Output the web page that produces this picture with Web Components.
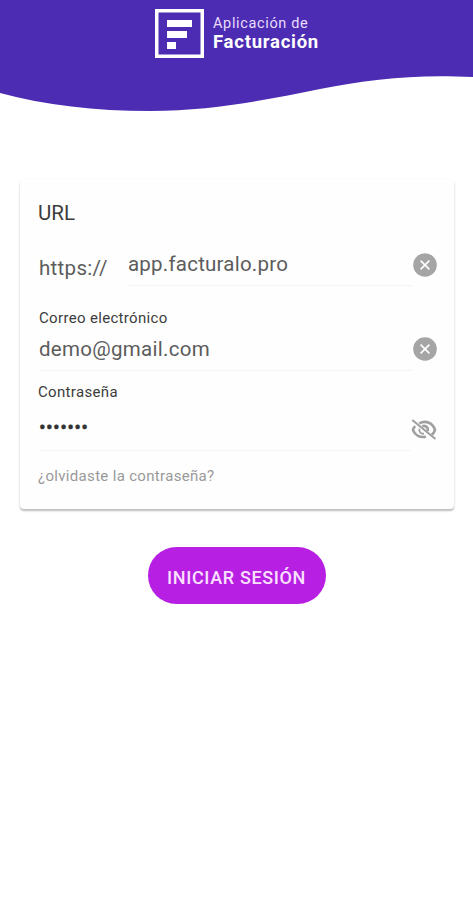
<!DOCTYPE html>
<html lang="es">
<head>
<meta charset="utf-8">
<title>Facturación</title>
<style>
body {
  margin: 0;
  background: #fff;
  font-family: Roboto, "Liberation Sans", sans-serif;
  color: #5c5c5c;
}
</style>
</head>
<body>
<login-page>
  <app-header slot="header">
    <span slot="top">Aplicación de</span>
    <span slot="name">Facturación</span>
  </app-header>
  <login-card>
    <span slot="title">URL</span>
    <login-field class="url" icon="clear">
      <span slot="prefix">https://</span>
      <span>app.facturalo.pro</span>
    </login-field>
    <login-field class="mail" icon="clear">
      <span slot="label">Correo electrónico</span>
      <span>demo@gmail.com</span>
    </login-field>
    <login-field class="pass" icon="hidden">
      <span slot="label">Contraseña</span>
      <span class="dots">•••••••</span>
    </login-field>
    <span slot="footer">¿olvidaste la contraseña?</span>
  </login-card>
  <pill-button slot="action">INICIAR SESIÓN</pill-button>
</login-page>

<script>
const define = (name, html) => {
  const t = document.createElement('template');
  t.innerHTML = html;
  customElements.define(name, class extends HTMLElement {
    constructor() {
      super();
      this.attachShadow({ mode: 'open' });
      this.shadowRoot.appendChild(t.content.cloneNode(true));
    }
  });
};

define('login-page', `
<style>
:host {
  display: flex;
  flex-direction: column;
  height: 900px;
  overflow: hidden;
}
main {
  padding: 67px 19px 0 20px;
}
.action {
  display: flex;
  justify-content: center;
  padding-top: 38px;
}
</style>
<slot name="header"></slot>
<main><slot></slot></main>
<div class="action"><slot name="action"></slot></div>
`);

define('app-header', `
<style>
:host {
  display: grid;
  height: 112px;
  color: #e9dcff;
}
.wave, .brand {
  grid-area: 1 / 1;
}
.wave {
  display: block;
}
.brand {
  display: flex;
  align-items: flex-start;
  gap: 9px;
  padding: 9px 0 0 155px;
}
.text {
  display: flex;
  flex-direction: column;
  padding-top: 6px;
}
.top {
  font-size: 14.5px;
  line-height: 18px;
  letter-spacing: .65px;
}
.name {
  font-size: 18.5px;
  font-weight: 700;
  line-height: 18px;
  letter-spacing: .75px;
  color: #fff;
}
</style>
<svg class="wave" width="473" height="112" viewBox="0 0 473 112">
  <path fill="#4c2cb3" d="M0 0H473V77C415 74 370 79 320 89C270 99 215 111 150 111C95 111 45 105 0 93Z"/>
</svg>
<div class="brand">
  <svg width="49" height="49" viewBox="0 0 49 49">
    <rect x="1.75" y="1.75" width="45.5" height="45.5" fill="none" stroke="#fff" stroke-width="3.5"/>
    <path fill="#fff" d="M12 11H37V18H12ZM12 22H32V29H12ZM12 33H21V40H12Z"/>
  </svg>
  <div class="text">
    <div class="top"><slot name="top"></slot></div>
    <div class="name"><slot name="name"></slot></div>
  </div>
</div>
`);

define('login-card', `
<style>
:host {
  display: flex;
  flex-direction: column;
  box-sizing: border-box;
  height: 330px;
  padding: 22px 16px 0 18px;
  border-radius: 4px;
  background: #fefefe;
  box-shadow: 0 2px 2px rgba(0, 0, 0, .25), 0 0 3px rgba(0, 0, 0, .04);
}
.title {
  font-size: 20.5px;
  line-height: 24px;
  color: #3c3c3c;
}
.footer {
  padding-top: 15px;
  font-size: 15px;
  line-height: 20px;
  letter-spacing: .32px;
  color: #999;
}
</style>
<div class="title"><slot name="title"></slot></div>
<slot></slot>
<div class="footer"><slot name="footer"></slot></div>
`);

const icons = {
  clear: `<svg width="24" height="24" viewBox="0 0 24 24">
    <circle cx="12" cy="12" r="11.8" fill="#a5a5a5"/>
    <path d="M7.6 7.6L16.4 16.4M16.4 7.6L7.6 16.4" stroke="#fff" stroke-width="1.6"/>
  </svg>`,
  hidden: `<svg width="26" height="24" viewBox="0 0 26 24">
    <g fill="none" stroke="#a0a0a0">
      <path d="M8.2 5.3C15 1.8 22 5 24 12C23.2 14.2 22.3 15.6 20.8 16.8" stroke-width="2.6"/>
      <path d="M4.2 8.2C2.8 9.6 2 11 2 12C4 17.4 9 20 15 18.7" stroke-width="2.6"/>
      <path d="M11.3 8.2C15 6.9 17.6 10 16.8 13" stroke-width="2.8"/>
      <path d="M8.4 10.8C7.6 13.8 10.2 16.2 13 15.7" stroke-width="1.8"/>
      <path d="M1.3 2L24.5 21" stroke-width="2.2"/>
    </g>
  </svg>`
};

const field = document.createElement('template');
field.innerHTML = `
<style>
:host {
  display: flex;
  flex-direction: column;
  font-size: 20.5px;
  letter-spacing: .22px;
}
.label {
  display: none;
  padding-left: 1px;
  font-size: 15px;
  line-height: 18px;
  letter-spacing: .33px;
  color: #3c3c3c;
}
.row {
  display: flex;
}
.prefix {
  display: none;
}
.value {
  flex: 1;
  line-height: 24px;
  border-bottom: 1px solid #f5f5f5;
}
.icon {
  display: flex;
  width: 25px;
}
:host(.url) {
  padding-top: 27px;
}
:host(.url) .prefix {
  display: block;
  width: 90px;
  padding: 4px 0 0 1px;
  box-sizing: border-box;
  line-height: 24px;
  letter-spacing: .3px;
}
:host(.url) .icon {
  padding-top: 1px;
}
:host(.url) .value {
  height: 33px;
}
:host(.mail) {
  padding-top: 23px;
}
:host(.mail) .row {
  padding-top: 10px;
}
:host(.mail) .value {
  height: 33px;
  margin-left: 1px;
  letter-spacing: .3px;
}
:host(.pass) {
  padding-top: 12px;
}
:host(.pass) .label {
  padding-left: 0;
}
:host(.pass) .value {
  height: 35px;
  padding-top: 14px;
  margin-left: 1px;
}
:host(.mail) .label, :host(.pass) .label {
  display: block;
}
:host(.pass) .icon {
  padding-top: 17px;
  width: 27px;
}
::slotted(.dots) {
  font-size: 20px;
  letter-spacing: .3px;
  color: #333;
  -webkit-text-stroke: .5px #333;
}
</style>
<div class="label"><slot name="label"></slot></div>
<div class="row">
  <div class="prefix"><slot name="prefix"></slot></div>
  <div class="value"><slot></slot></div>
  <div class="icon"></div>
</div>
`;

class LoginField extends HTMLElement {
  constructor() {
    super();
    this.attachShadow({ mode: 'open' });
    this.shadowRoot.appendChild(field.content.cloneNode(true));
  }
  connectedCallback() {
    this.shadowRoot.querySelector('.icon').innerHTML = icons[this.getAttribute('icon')] || '';
  }
}
customElements.define('login-field', LoginField);

define('pill-button', `
<style>
:host {
  display: flex;
  align-items: center;
  justify-content: center;
  box-sizing: border-box;
  width: 178px;
  height: 57px;
  padding-top: 4px;
  border-radius: 29px;
  background: #b71fe3;
  color: #fbe0ff;
  font-size: 18px;
  font-weight: 500;
  letter-spacing: .65px;
}
</style>
<slot></slot>
`);
</script>
</body>
</html>
